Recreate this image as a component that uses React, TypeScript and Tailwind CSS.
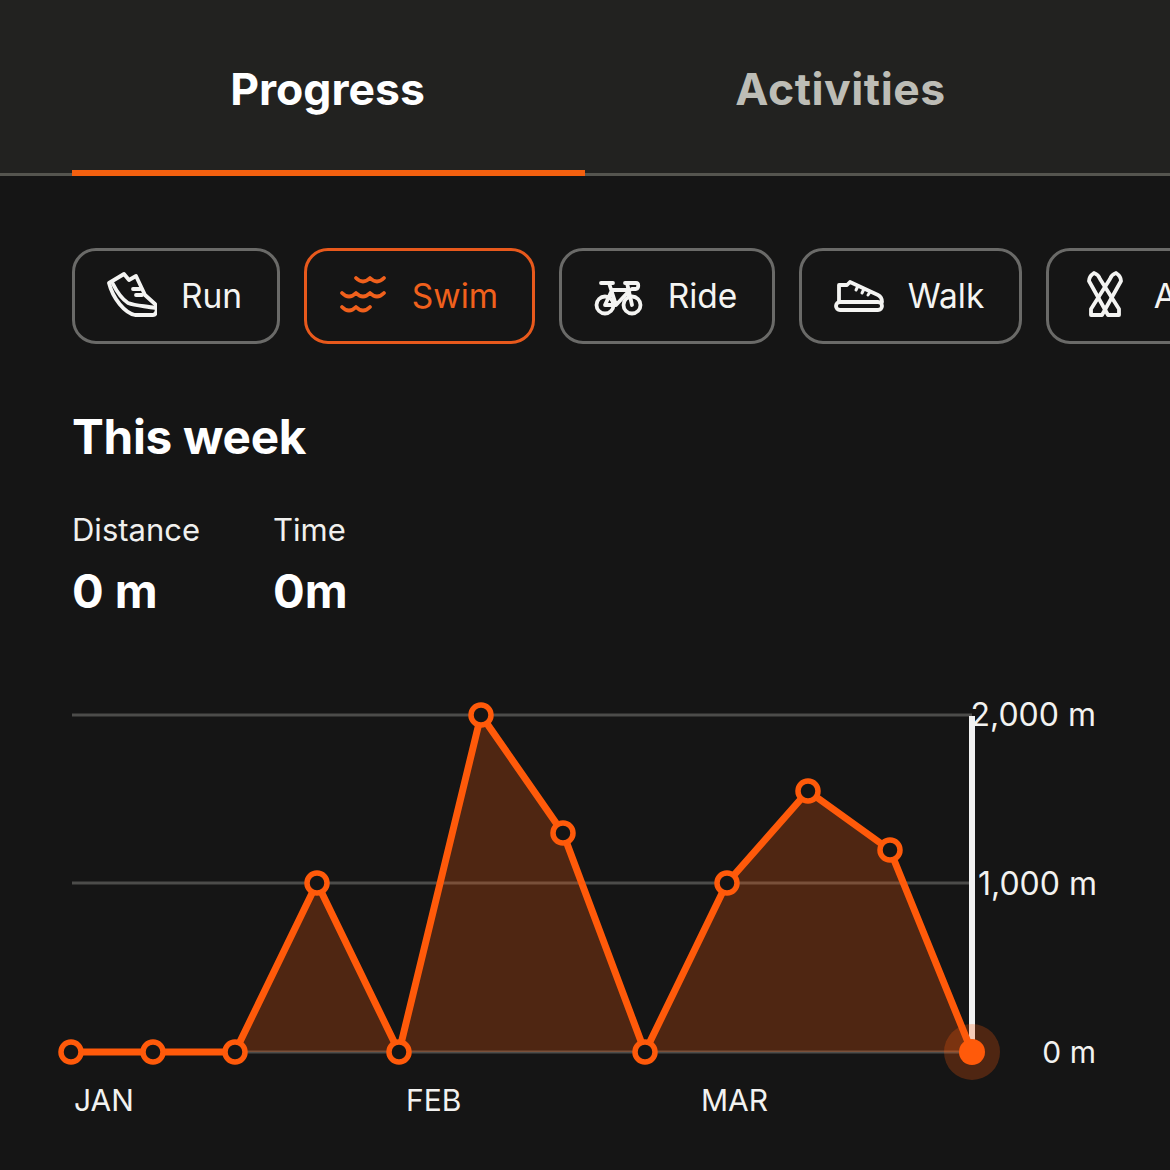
import type { ReactNode } from 'react';

const ORANGE = '#ff5a0a';

const points: [number, number][] = [
  [71, 1052], [153, 1052], [235, 1052], [317, 883], [399, 1052], [481, 715],
  [563, 833], [645, 1052], [727, 883], [808, 791], [890, 850], [972, 1052],
];

function IconFrame({ children }: { children: ReactNode }) {
  return (
    <svg viewBox="0 0 50 50" fill="none" stroke="currentColor" strokeWidth="3.8" strokeLinecap="round" strokeLinejoin="round" className="w-[50px] h-[50px] shrink-0">
      {children}
    </svg>
  );
}

const RunIcon = () => (
  <IconFrame>
    <path d="M2 12 17 3l5 6 7-4 9 19 10 9c3 3 2 11-2 11H28C18 42 6 28 2 12Z" />
    <path d="M6 13c4 8 9 15 15 19 8 3 18 3 27 5M26 18h7M29 24h6" />
  </IconFrame>
);

const SwimIcon = () => (
  <IconFrame>
    <path d="M18 7q7 7 14 0q7 7 14 0" />
    <path d="M4 22q7 7 14 0q7 7 14 0q7 7 14 0" />
    <path d="M4 36q7 7 14 0q7 7 14 0" />
  </IconFrame>
);

const RideIcon = () => (
  <IconFrame>
    <circle cx="11" cy="34" r="8.5" />
    <circle cx="38" cy="34" r="8.5" />
    <path d="M7 12h12M15 12l7 22H11l7-15h18L22 34M33 12l5 22M31 12h11c3 0 3 5 0 6h-4" />
  </IconFrame>
);

const WalkIcon = () => (
  <IconFrame>
    <path d="M5 31V14h8l3-3 28 13c2 1 4 4 4 7" />
    <rect x="2" y="31" width="46" height="8" rx="4" />
    <path d="M24 15l-2 4M30 18l-2 4M36 21l-2 3" strokeWidth="3" />
  </IconFrame>
);

const SkiIcon = () => (
  <IconFrame>
    <path d="M9 10c0-3 2-6 5-8 3 1 5 3 6 6l19 30v6H28L9 10Z" />
    <path d="M41 10c0-3-2-6-5-8-3 1-5 3-6 6L11 38v6h11l19-34Z" />
  </IconFrame>
);

type Sport = { label: string; icon: ReactNode; width: string; active?: boolean };

const sports: Sport[] = [
  { label: 'Run', icon: <RunIcon />, width: 'w-[208px]' },
  { label: 'Swim', icon: <SwimIcon />, width: 'w-[231px]', active: true },
  { label: 'Ride', icon: <RideIcon />, width: 'w-[216px]' },
  { label: 'Walk', icon: <WalkIcon />, width: 'w-[223px]' },
  { label: 'All', icon: <SkiIcon />, width: 'w-[184px]' },
];

function SportPill({ sport }: { sport: Sport }) {
  return (
    <div
      className={`${sport.width} h-[96px] shrink-0 flex items-center justify-center gap-[24px] pr-[3px] rounded-[24px] border-[3px] ${
        sport.active ? 'border-[#e8591c] text-[#f0601c]' : 'border-[#6a6a68] text-[#f4f4f2]'
      }`}
    >
      {sport.icon}
      <span className="text-[33.5px] leading-none pt-[2px]">{sport.label}</span>
    </div>
  );
}

function Chart() {
  const line = points.map((p) => p.join(',')).join(' ');
  return (
    <svg viewBox="0 680 1170 490" className="block w-[1170px] h-[490px]" style={{ fontFamily: 'Inter, sans-serif' }}>
      <path d="M72 715H972M72 883H972M72 1052H972" stroke="#4c4c4a" strokeWidth="3" />
      <polygon points={line} fill={ORANGE} fillOpacity="0.25" />
      <path d="M972 716V1052" stroke="#f2f2f2" strokeWidth="6" />
      <polyline points={line} fill="none" stroke={ORANGE} strokeWidth="7" strokeLinejoin="round" />
      {points.slice(0, -1).map(([x, y]) => (
        <circle key={x} cx={x} cy={y} r="10" fill="#151515" stroke={ORANGE} strokeWidth="5.5" />
      ))}
      <circle cx="972" cy="1052" r="28" fill={ORANGE} fillOpacity="0.25" />
      <circle cx="972" cy="1052" r="13" fill={ORANGE} />
      <g fill="#f2f2f0" fontSize="32" textAnchor="end">
        <text x="1096" y="726">2,000 m</text>
        <text x="1097" y="895">1,000 m</text>
        <text x="1096" y="1063" fontSize="30">0 m</text>
      </g>
      <g fill="#f2f2f0" fontSize="30">
        <text x="74" y="1111">JAN</text>
        <text x="406" y="1111">FEB</text>
        <text x="701" y="1111">MAR</text>
      </g>
    </svg>
  );
}

export default function App() {
  return (
    <main className="w-[1170px] h-[1170px] overflow-hidden bg-[#151515] text-white font-['Inter',sans-serif]">
      <header className="h-[176px] bg-[#222220] border-b-[3px] border-[#55554f] px-[72px] flex">
        <div className="relative w-[513px] flex items-center justify-center pt-[6px] pr-[2px] text-[44.5px] font-bold">
          Progress
          <span className="absolute left-0 right-0 bottom-[-3px] h-[6px] bg-[#f4600f]"></span>
        </div>
        <div className="w-[513px] flex items-center justify-center pt-[6px] pr-[2px] text-[44.5px] font-bold tracking-[0.5px] text-[#bdbdb6]">
          Activities
        </div>
      </header>

      <div className="flex gap-[24px] pl-[72px] mt-[72px]">
        {sports.map((s) => (
          <SportPill key={s.label} sport={s} />
        ))}
      </div>

      <h1 className="ml-[72px] mt-[64px] text-[47.7px] leading-[58px] font-bold tracking-[-0.3px]">This week</h1>

      <div className="ml-[72px] mt-[46px] flex gap-[73px]">
        <div className="w-[128px]">
          <div className="text-[31px] leading-[36px] text-[#f0f0ee]">Distance</div>
          <div className="mt-[13px] text-[47px] leading-[60px] font-bold">0 m</div>
        </div>
        <div>
          <div className="text-[31px] leading-[36px] text-[#f0f0ee]">Time</div>
          <div className="mt-[13px] text-[47px] leading-[60px] font-bold">0m</div>
        </div>
      </div>

      <div className="mt-[59px]">
        <Chart />
      </div>
    </main>
  );
}
